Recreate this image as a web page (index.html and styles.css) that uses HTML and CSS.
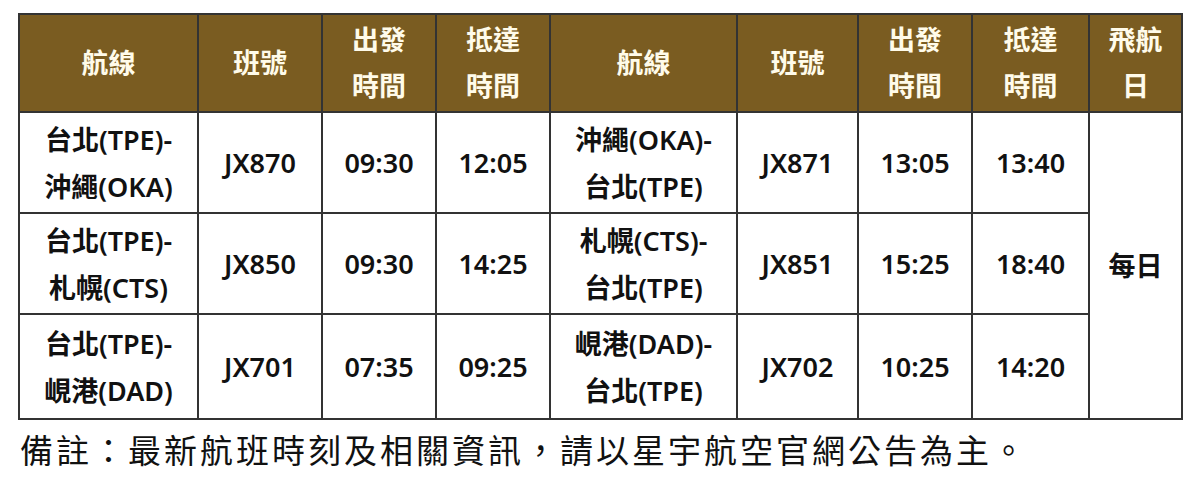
FILE: index.html
```html
<!DOCTYPE html>
<html lang="zh-Hant">
<head>
<meta charset="utf-8">
<title>航班時刻表</title>
<link rel="stylesheet" href="styles.css">
</head>
<body>
<div class="page">
  <table class="schedule">
    <colgroup>
      <col class="c-route">
      <col class="c-flight">
      <col class="c-time">
      <col class="c-time">
      <col class="c-route2">
      <col class="c-flight2">
      <col class="c-time">
      <col class="c-time2">
      <col class="c-day">
    </colgroup>
    <thead>
      <tr>
        <th>航線</th>
        <th>班號</th>
        <th>出發<br>時間</th>
        <th>抵達<br>時間</th>
        <th>航線</th>
        <th>班號</th>
        <th>出發<br>時間</th>
        <th>抵達<br>時間</th>
        <th>飛航<br>日</th>
      </tr>
    </thead>
    <tbody>
      <tr>
        <td>台北(TPE)-<br>沖繩(OKA)</td>
        <td>JX870</td>
        <td>09:30</td>
        <td>12:05</td>
        <td>沖繩(OKA)-<br>台北(TPE)</td>
        <td>JX871</td>
        <td>13:05</td>
        <td>13:40</td>
        <td rowspan="3">每日</td>
      </tr>
      <tr>
        <td>台北(TPE)-<br>札幌(CTS)</td>
        <td>JX850</td>
        <td>09:30</td>
        <td>14:25</td>
        <td>札幌(CTS)-<br>台北(TPE)</td>
        <td>JX851</td>
        <td>15:25</td>
        <td>18:40</td>
      </tr>
      <tr class="last">
        <td>台北(TPE)-<br>峴港(DAD)</td>
        <td>JX701</td>
        <td>07:35</td>
        <td>09:25</td>
        <td>峴港(DAD)-<br>台北(TPE)</td>
        <td>JX702</td>
        <td>10:25</td>
        <td>14:20</td>
      </tr>
    </tbody>
  </table>
  <p class="note">備註：最新航班時刻及相關資訊，請以星宇航空官網公告為主。</p>
</div>
</body>
</html>
```

FILE: styles.css
```css
html, body {
  margin: 0;
  padding: 0;
  background: #ffffff;
}

.page {
  padding: 13px 0 0 18px;
}

.schedule {
  border-collapse: collapse;
  table-layout: fixed;
  width: 1163px;
  font-family: "Noto Sans", "Noto Sans CJK TC", sans-serif;
  font-weight: 600;
  font-size: 27px;
  color: #111111;
}

.c-route { width: 179px; }
.c-flight { width: 124px; }
.c-time { width: 114px; }
.c-route2 { width: 187px; }
.c-flight2 { width: 121px; }
.c-time2 { width: 117px; }
.c-day { width: 93px; }

.schedule th,
.schedule td {
  border: 2px solid #333333;
  text-align: center;
  vertical-align: middle;
  padding: 0;
}

.schedule th {
  background: #7a5c21;
  color: #fffbea;
  font-weight: 700;
  height: 96px;
  line-height: 46px;
}

.schedule td {
  height: 99px;
  line-height: 47px;
}

.schedule .last td {
  height: 103px;
}

.note {
  margin: 9px 0 0 2px;
  font-family: "Noto Sans CJK TC", sans-serif;
  font-weight: 400;
  font-size: 33px;
  letter-spacing: 3px;
  line-height: 40px;
  color: #111111;
}
```
